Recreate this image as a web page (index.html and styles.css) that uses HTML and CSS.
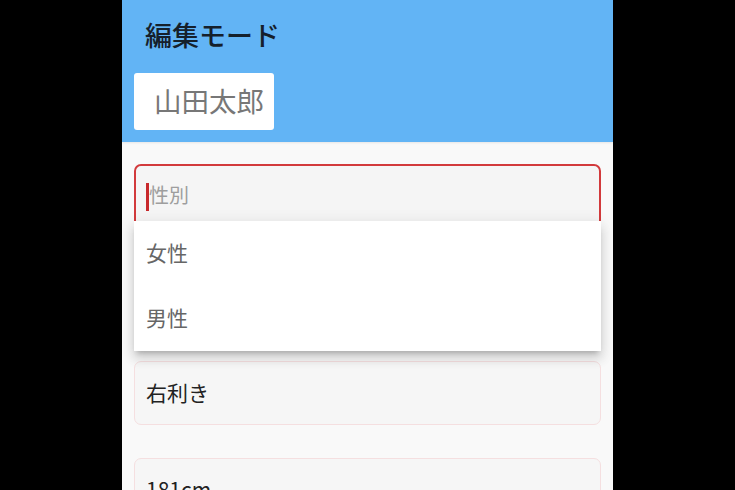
FILE: index.html
```html
<!DOCTYPE html>
<html lang="ja">
<head>
<meta charset="utf-8">
<title>編集モード</title>
<link rel="stylesheet" href="styles.css">
</head>
<body>
<div class="app">
  <header class="header">
    <h1 class="title">編集モード</h1>
    <div class="name-box">山田太郎</div>
  </header>
  <main class="form">
    <div class="field field-focused">
      <span class="caret"></span>
      <span class="placeholder">性別</span>
      <ul class="menu">
        <li class="menu-item">女性</li>
        <li class="menu-item">男性</li>
      </ul>
    </div>
    <div class="field field-after-menu">
      <span class="value">右利き</span>
    </div>
    <div class="field field-next">
      <span class="value">181cm</span>
    </div>
  </main>
</div>
</body>
</html>
```
FILE: styles.css
```css
html, body {
  margin: 0;
  padding: 0;
  background: #000;
}
body {
  font-family: "Noto Sans CJK JP", "Noto Sans", sans-serif;
}
.app {
  width: 491px;
  height: 490px;
  margin: 0 auto;
  overflow: hidden;
  background: #f9f9f9;
}
.header {
  background: #62b4f5;
  padding: 16px 12px 12px;
  box-shadow: 0 1px 2px rgba(0, 0, 0, 0.08);
  position: relative;
}
.title {
  margin: 0;
  padding-left: 11px;
  font-size: 27px;
  line-height: 38px;
  font-weight: 500;
  color: #15202b;
}
.name-box {
  display: inline-block;
  margin-top: 19px;
  height: 57px;
  line-height: 55px;
  padding: 0 10px 0 20px;
  background: #fff;
  border-radius: 3px;
  font-size: 27.5px;
  color: #777;
}
.form {
  padding: 22px 12px 0;
}
.field {
  box-sizing: border-box;
  height: 64px;
  border: 1px solid #f5dfe0;
  border-radius: 7px;
  background: #f6f6f6;
  display: flex;
  align-items: center;
  padding-left: 11px;
  padding-bottom: 3px;
  position: relative;
}
.field-focused {
  border: 2px solid #d23a3c;
  background: #f5f5f5;
  padding-left: 10px;
}
.caret {
  width: 3px;
  height: 28px;
  background: #c8292c;
  margin-top: 4px;
}
.placeholder {
  font-size: 20px;
  color: #9e9e9e;
}
.value {
  font-size: 21px;
  color: #222;
}
.field-after-menu {
  margin-top: 133px;
}
.field-next {
  margin-top: 33px;
}
.menu {
  list-style: none;
  margin: 0;
  padding: 0;
  position: absolute;
  top: 55px;
  left: -2px;
  right: -2px;
  background: #fff;
  z-index: 2;
  box-shadow: 0 5px 5px -3px rgba(0, 0, 0, 0.2), 0 8px 10px 1px rgba(0, 0, 0, 0.1), 0 3px 14px 2px rgba(0, 0, 0, 0.08);
}
.menu-item {
  height: 65px;
  display: flex;
  align-items: center;
  padding-left: 12px;
  padding-bottom: 3px;
  box-sizing: border-box;
  font-size: 21px;
  color: #666;
}
```
